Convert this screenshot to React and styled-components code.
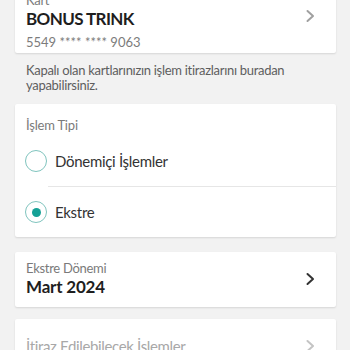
import React, { useState } from "react";
import styled, { createGlobalStyle } from "styled-components";

const GlobalStyle = createGlobalStyle`
  html, body {
    margin: 0;
    padding: 0;
    background: #f2f2f2;
    font-family: Lato, "Open Sans", Arial, sans-serif;
    overflow: hidden;
  }
`;

const Chevron = ({ color = "#999" }) => (
  <svg width="10" height="14" viewBox="0 0 10 14">
    <polyline
      points="2.5,2 8,7 2.5,12"
      fill="none"
      stroke={color}
      strokeWidth="2"
      strokeLinecap="round"
      strokeLinejoin="round"
    />
  </svg>
);

const App = () => {
  const [type, setType] = useState("ekstre");

  return (
    <Page>
      <GlobalStyle />
      <Card first>
        <CardBody>
          <Label>Kart</Label>
          <Title>BONUS TRINK</Title>
          <Number>5549 **** **** 9063</Number>
        </CardBody>
        <ChevronBox top>
          <Chevron color="#a0a0a0" />
        </ChevronBox>
      </Card>

      <Info>Kapalı olan kartlarınızın işlem itirazlarını buradan yapabilirsiniz.</Info>

      <TypeCard>
        <TypeHeader>İşlem Tipi</TypeHeader>
        <RadioRow divider onClick={() => setType("donemici")}>
          <Radio checked={type === "donemici"} />
          <RadioText>Dönemiçi İşlemler</RadioText>
        </RadioRow>
        <RadioRow onClick={() => setType("ekstre")}>
          <Radio checked={type === "ekstre"} />
          <RadioText>Ekstre</RadioText>
        </RadioRow>
      </TypeCard>

      <Card>
        <CardBody>
          <Label>Ekstre Dönemi</Label>
          <Value>Mart 2024</Value>
        </CardBody>
        <ChevronBox>
          <Chevron color="#333" />
        </ChevronBox>
      </Card>

      <DisabledCard>
        <DisabledText>İtiraz Edilebilecek İşlemler</DisabledText>
        <ChevronBox>
          <Chevron color="#c4c4c4" />
        </ChevronBox>
      </DisabledCard>
    </Page>
  );
};

export default App;

const Page = styled.div`
  width: 350px;
  height: 350px;
  padding: 0 14px 0 15px;
  box-sizing: border-box;
  display: flex;
  flex-direction: column;
`;

const Card = styled.div`
  display: flex;
  justify-content: space-between;
  background: #fff;
  border-radius: 2px;
  box-shadow: 0 1px 2px rgba(0, 0, 0, 0.12);
  margin-top: ${(p) => (p.first ? "-14px" : "15px")};
  padding: ${(p) => (p.first ? "6px 11px 2px" : "8px 11px 9px")};
`;

const CardBody = styled.div`
  display: flex;
  flex-direction: column;
`;

const Label = styled.div`
  font-size: 13px;
  line-height: 16px;
  color: #7a7a7a;
  letter-spacing: -0.3px;
`;

const Title = styled.div`
  font-size: 17px;
  line-height: 22px;
  font-weight: 700;
  color: #1e1e1e;
  letter-spacing: -0.6px;
`;

const Number = styled.div`
  margin-top: 3px;
  font-size: 13px;
  line-height: 18px;
  color: #7c7c7c;
`;

const Value = styled.div`
  font-size: 17px;
  line-height: 22px;
  font-weight: 700;
  color: #1e1e1e;
  letter-spacing: -0.2px;
`;

const ChevronBox = styled.div`
  display: flex;
  align-items: ${(p) => (p.top ? "flex-start" : "center")};
  padding-top: ${(p) => (p.top ? "17px" : "0")};
  padding-right: 10px;
`;

const Info = styled.p`
  margin: 0;
  padding: 10px 11px 11px;
  font-size: 13px;
  line-height: 15px;
  color: #5e5e5e;
  letter-spacing: -0.3px;
`;

const TypeCard = styled.div`
  background: #fff;
  border-radius: 2px;
  box-shadow: 0 1px 2px rgba(0, 0, 0, 0.12);
  padding-top: 12px;
`;

const TypeHeader = styled.div`
  padding: 0 11px;
  font-size: 13px;
  line-height: 18px;
  color: #7a7a7a;
  letter-spacing: -0.2px;
  margin-bottom: 2px;
`;

const RadioRow = styled.div`
  display: flex;
  align-items: center;
  gap: 8px;
  height: 50px;
  padding-left: 10px;
  cursor: pointer;
  position: relative;
  border-bottom: ${(p) => (p.divider ? "1px solid transparent" : "none")};

  &::after {
    content: "";
    display: ${(p) => (p.divider ? "block" : "none")};
    position: absolute;
    left: 33px;
    right: 0;
    bottom: -1px;
    height: 1px;
    background: #e6e6e6;
  }
`;

const Radio = styled.span`
  width: 20px;
  height: 20px;
  border-radius: 50%;
  border: 1px solid #7fc4be;
  display: flex;
  align-items: center;
  justify-content: center;

  &::after {
    content: "";
    width: 9px;
    height: 9px;
    border-radius: 50%;
    background: #16a196;
    display: ${(p) => (p.checked ? "block" : "none")};
  }
`;

const RadioText = styled.span`
  font-size: 15px;
  color: #333;
  letter-spacing: -0.3px;
`;

const DisabledCard = styled.div`
  display: flex;
  justify-content: space-between;
  background: #fff;
  border-radius: 2px;
  box-shadow: 0 1px 2px rgba(0, 0, 0, 0.12);
  margin-top: 12px;
  padding: 17px 11px 17px;
`;

const DisabledText = styled.div`
  font-size: 15px;
  line-height: 20px;
  color: #a8a8a8;
  letter-spacing: -0.35px;
`;
